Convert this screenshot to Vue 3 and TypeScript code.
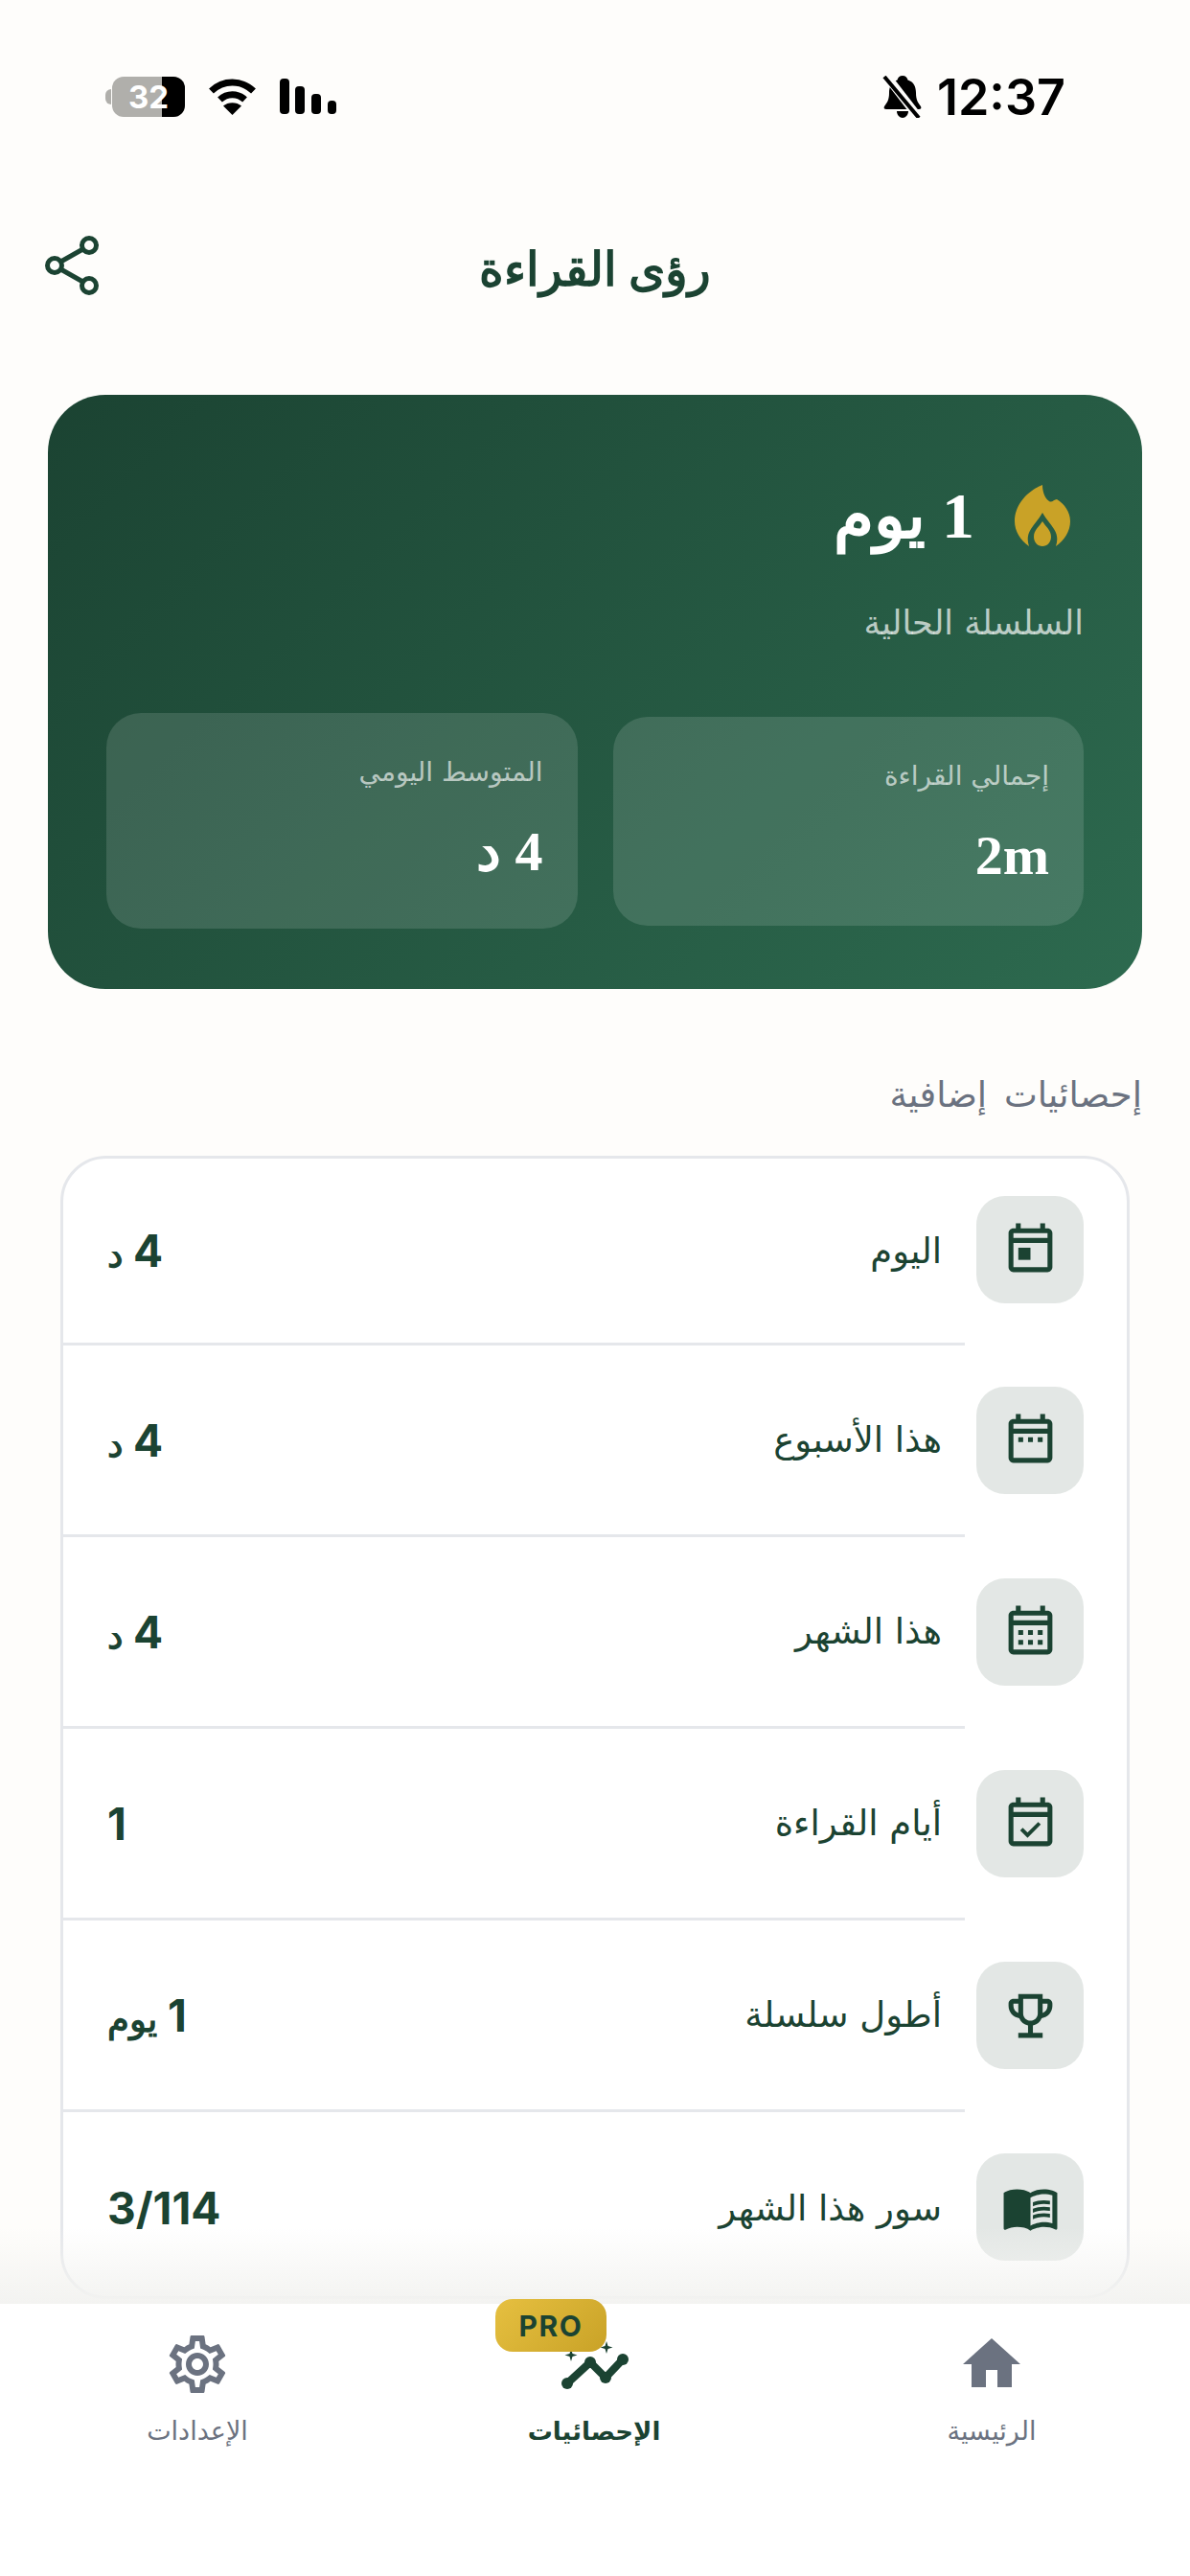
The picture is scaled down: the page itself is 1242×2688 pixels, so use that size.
<template>
  <div class="page" dir="rtl">
    <div class="status-bar">
      <div class="status-time">
        <span class="time" dir="ltr">12:37</span>
        <svg class="bell" width="42" height="44" viewBox="0 0 42 44">
          <path d="M21 0c3 0 5 2 5.500 4.500C33 6.500 35 12 35 18c0 7 2 10 5 14 1 2 0 3-2 3H4c-2 0-3-1-2-3 3-4 5-7 5-14C7 12 9 6.500 15.500 4.500 16 2 18 0 21 0z" fill="#000" />
          <path d="M15 37h12c0 4-3 7-6 7s-6-3-6-7z" fill="#000" />
          <path d="M4 0l34 44" stroke="#fefdfb" stroke-width="9" />
          <path d="M2 1l36 43" stroke="#000" stroke-width="4" />
        </svg>
      </div>
      <div class="status-right">
        <svg width="60" height="38" viewBox="0 0 60 38">
          <rect x="0" y="0" width="10" height="37" rx="4" />
          <rect x="16" y="8" width="10" height="29" rx="4" />
          <rect x="33" y="16" width="10" height="21" rx="4" />
          <rect x="50" y="23" width="9" height="14" rx="4" />
        </svg>
        <svg width="51" height="38" viewBox="0 0 51 38">
          <path d="M3.500 13C16 1 35 1 47.500 13" fill="none" stroke="#000" stroke-width="7" />
          <path d="M12.500 22C20 15 31 15 38.500 22" fill="none" stroke="#000" stroke-width="7" />
          <path d="M25.500 38L16 28.500C21 24 30 24 35 28.500z" />
        </svg>
        <div class="battery" dir="ltr">
          <span class="battery-nub"></span>
          <div class="battery-body">
            <span class="battery-level"></span>
            <span class="battery-text">32</span>
          </div>
        </div>
      </div>
    </div>

    <header class="header">
      <h1 class="title">رؤى القراءة</h1>
      <svg class="share" width="58" height="62" viewBox="0 0 58 62" fill="none" stroke="#1b4332" stroke-width="5">
        <circle cx="47" cy="10" r="7.500" />
        <circle cx="11" cy="31" r="7.500" />
        <circle cx="47" cy="52" r="7.500" />
        <path d="M40.500 14L17.500 27M17.500 35l23 13" />
      </svg>
    </header>

    <main class="content">
      <section class="hero">
        <div class="streak">
          <svg class="flame" width="58" height="64" viewBox="0 0 58 64">
            <path d="M29 0C29 6 31 14 36 17C39 19 41 15 44 15C52 20 58 28 58 38C58 48 52 58 43 64C45 58 45 52 41 46C38 41 33 36 29 29C25 36 20 41 17 46C13 52 13 58 15 64C6 58 0 48 0 38C0 20 14 6 29 0Z" fill="#c9a227" />
            <path d="M29 38C32 43 38 47 38 54C38 60 34 64 29 64C24 64 20 60 20 54C20 47 26 43 29 38Z" fill="#c9a227" />
          </svg>
          <span class="streak-value">1 يوم</span>
        </div>
        <p class="streak-label">السلسلة الحالية</p>
        <div class="hero-stats">
          <div class="hero-stat">
            <span class="hero-stat-label">إجمالي القراءة</span>
            <span class="hero-stat-value">2m</span>
          </div>
          <div class="hero-stat hero-stat-big">
            <span class="hero-stat-label">المتوسط اليومي</span>
            <span class="hero-stat-value">4 د</span>
          </div>
        </div>
      </section>

      <h2 class="section-title">إحصائيات إضافية</h2>

      <section class="list">
        <div v-for="row in rows" :key="row.label" class="row">
          <div class="row-icon">
            <svg width="61" height="61" viewBox="0 0 24 24" fill="#1b4332">
              <path v-if="row.icon !== 'trophy' && row.icon !== 'book'" fill-rule="evenodd" :d="calendarPath" />
              <path v-if="row.icon === 'today'" d="M7 11h5v5H7z" />
              <path v-if="row.icon === 'week'" d="M7 10.500h2v2H7zM11 10.500h2v2h-2zM15 10.500h2v2h-2z" />
              <path v-if="row.icon === 'month'" d="M7 11h2v2H7zM11 11h2v2h-2zM15 11h2v2h-2zM7 15h2v2H7zM11 15h2v2h-2zM15 15h2v2h-2z" />
              <path v-if="row.icon === 'check'" d="M8.300 14l2.500 2.500 4.900-4.900" fill="none" stroke="#1b4332" stroke-width="1.500" />
              <path v-if="row.icon === 'trophy'" d="M19 5h-2V3H7v2H5c-1.100 0-2 .9-2 2v1c0 2.550 1.920 4.630 4.390 4.940.63 1.500 1.980 2.630 3.610 2.960V19H7v2h10v-2h-4v-3.100c1.630-.33 2.980-1.460 3.610-2.960C19.080 12.630 21 10.550 21 8V7c0-1.100-.9-2-2-2zM5 8V7h2v3.820C5.840 10.400 5 9.300 5 8zm7 6c-1.650 0-3-1.350-3-3V5h6v6c0 1.650-1.350 3-3 3zm7-6c0 1.300-.84 2.400-2 2.820V7h2v1z" />
              <template v-if="row.icon === 'book'">
                <path d="M21 5c-1.110-.35-2.330-.5-3.500-.5-1.950 0-4.050.4-5.500 1.500-1.450-1.100-3.550-1.500-5.500-1.500S2.450 4.900 1 6v14.650c0 .25.25.5.5.5.1 0 .15-.05.25-.05C3.100 20.450 5.050 20 6.500 20c1.950 0 4.050.4 5.500 1.500 1.350-.85 3.800-1.500 5.500-1.500 1.650 0 3.350.3 4.750 1.050.1.05.15.05.25.05.25 0 .5-.25.5-.5V6c-.6-.45-1.250-.75-2-1zm0 13.500c-1.100-.35-2.300-.5-3.500-.5-1.700 0-4.150.65-5.500 1.500V8c1.350-.85 3.800-1.500 5.500-1.500 1.200 0 2.400.15 3.500.5v11.500z" />
                <path d="M17.500 10.500c.88 0 1.730.09 2.500.26V9.240c-.79-.15-1.640-.24-2.500-.24-1.700 0-3.240.29-4.500.83v1.660c1.130-.64 2.700-.99 4.500-.99zM13 12.490v1.660c1.130-.64 2.700-.99 4.500-.99.88 0 1.730.09 2.500.26V11.900c-.79-.15-1.640-.24-2.500-.24-1.700 0-3.240.3-4.500.83zM17.500 14.330c-1.700 0-3.240.29-4.500.83v1.660c1.130-.64 2.700-.99 4.500-.99.88 0 1.730.09 2.500.26v-1.520c-.79-.16-1.640-.24-2.500-.24z" />
              </template>
            </svg>
          </div>
          <div class="row-body">
            <span class="row-label">{{ row.label }}</span>
            <span class="row-value">{{ row.value }} <span v-if="row.unit" class="row-unit">{{ row.unit }}</span></span>
          </div>
        </div>
      </section>
      <div class="fade"></div>
    </main>

    <nav class="tabs">
      <div class="tab">
        <svg width="72" height="72" viewBox="0 0 24 24" fill="#6b7280">
          <path d="M10 20v-6h4v6h5v-8h3L12 3 2 12h3v8z" />
        </svg>
        <span class="tab-label">الرئيسية</span>
      </div>
      <div class="tab tab-active">
        <svg width="72" height="72" viewBox="0 0 72 72" fill="none">
          <path d="M8 56L32 34L48 50L66 31" stroke="#1b4332" stroke-width="8" stroke-linecap="round" stroke-linejoin="round" />
          <circle cx="8" cy="56" r="6" fill="#1b4332" />
          <circle cx="32" cy="34" r="6" fill="#1b4332" />
          <circle cx="48" cy="50" r="6" fill="#1b4332" />
          <circle cx="66" cy="31" r="6" fill="#1b4332" />
          <path d="M12 20l1.500 5 5 1.500-5 1.500-1.500 5-1.500-5-5-1.500 5-1.500z" fill="#1b4332" />
          <path d="M49 12l1.500 5 5 1.500-5 1.500-1.500 5-1.500-5-5-1.500 5-1.500z" fill="#1b4332" />
        </svg>
        <span class="tab-label">الإحصائيات</span>
        <span class="pro-badge" dir="ltr">PRO</span>
      </div>
      <div class="tab">
        <svg width="72" height="72" viewBox="0 0 24 24" fill="#6b7280">
          <path d="M19.430 12.980c.04-.32.07-.64.07-.98 0-.34-.03-.66-.07-.98l2.110-1.650c.19-.15.24-.42.12-.64l-2-3.460c-.09-.16-.26-.25-.44-.25-.06 0-.12.01-.17.03l-2.490 1c-.52-.4-1.080-.73-1.690-.98l-.38-2.650C14.460 2.180 14.250 2 14 2h-4c-.25 0-.46.18-.49.42l-.38 2.650c-.61.25-1.170.59-1.690.98l-2.490-1c-.06-.02-.12-.03-.18-.03-.17 0-.34.09-.43.25l-2 3.460c-.13.22-.07.49.12.64l2.110 1.650c-.04.32-.07.65-.07.98 0 .33.03.66.07.98l-2.110 1.650c-.19.15-.24.42-.12.64l2 3.460c.09.16.26.25.44.25.06 0 .12-.01.17-.03l2.490-1c.52.4 1.080.73 1.690.98l.38 2.650c.03.24.24.42.49.42h4c.25 0 .46-.18.49-.42l.38-2.650c.61-.25 1.170-.59 1.690-.98l2.490 1c.06.02.12.03.18.03.17 0 .34-.09.43-.25l2-3.460c.12-.22.07-.49-.12-.64l-2.110-1.650zm-1.980-1.710c.04.31.05.52.05.73 0 .21-.02.43-.05.73l-.14 1.130.89.7 1.080.84-.7 1.210-1.270-.51-1.040-.42-.9.68c-.43.32-.84.56-1.250.73l-1.060.43-.16 1.130-.2 1.350h-1.400l-.19-1.350-.16-1.130-1.060-.43c-.43-.18-.83-.41-1.230-.71l-.91-.7-1.060.43-1.270.51-.7-1.210 1.080-.84.89-.7-.14-1.130c-.03-.31-.05-.54-.05-.74s.02-.43.05-.73l.14-1.130-.89-.7-1.080-.84.7-1.210 1.270.51 1.040.42.9-.68c.43-.32.84-.56 1.250-.73l1.060-.43.16-1.130.2-1.350h1.390l.19 1.350.16 1.130 1.060.43c.43.18.83.41 1.230.71l.91.7 1.060-.43 1.270-.51.7 1.210-1.070.85-.89.7.14 1.130zM12 8c-2.210 0-4 1.790-4 4s1.790 4 4 4 4-1.790 4-4-1.790-4-4-4zm0 6c-1.100 0-2-.9-2-2s.9-2 2-2 2 .9 2 2-.9 2-2 2z" />
        </svg>
        <span class="tab-label">الإعدادات</span>
      </div>
    </nav>
  </div>
</template>

<script setup lang="ts">
interface StatRow {
  icon: string
  label: string
  value: string
  unit?: string
}

const calendarPath =
  'M19 3h-1V1h-2v2H8V1H6v2H5C3.900 3 3 3.900 3 5v14c0 1.100.9 2 2 2h14c1.100 0 2-.9 2-2V5c0-1.100-.9-2-2-2zm0 16H5V9h14v10zM5 7V5h14v2H5z'

const rows: StatRow[] = [
  { icon: 'today', label: 'اليوم', value: '4', unit: 'د' },
  { icon: 'week', label: 'هذا الأسبوع', value: '4', unit: 'د' },
  { icon: 'month', label: 'هذا الشهر', value: '4', unit: 'د' },
  { icon: 'check', label: 'أيام القراءة', value: '1' },
  { icon: 'trophy', label: 'أطول سلسلة', value: '1', unit: 'يوم' },
  { icon: 'book', label: 'سور هذا الشهر', value: '3/114' },
]
</script>

<style>
html,
body {
  margin: 0;
  background: #fefdfb;
}
</style>

<style scoped>
.page {
  width: 1242px;
  height: 2688px;
  display: flex;
  flex-direction: column;
  overflow: hidden;
  background: #fefdfb;
  color: #1b4332;
  font-family: "Liberation Serif", serif;
}

.status-bar {
  height: 202px;
  flex: none;
  box-sizing: border-box;
  padding: 0 130px 0 110px;
  display: flex;
  align-items: center;
  justify-content: space-between;
}

.status-time,
.status-right {
  display: flex;
  align-items: center;
}

.status-time {
  gap: 15px;
}

.status-right {
  gap: 24px;
}

.time {
  font-family: Inter, sans-serif;
  font-size: 52px;
  font-weight: 600;
  color: #000;
}

.battery {
  display: flex;
  align-items: center;
  gap: 1px;
}

.battery-nub {
  width: 6px;
  height: 16px;
  border-radius: 6px 0 0 6px;
  background: #b0afab;
}

.battery-body {
  position: relative;
  width: 76px;
  height: 42px;
  border-radius: 12px;
  overflow: hidden;
  background: #b0afab;
  display: flex;
  align-items: center;
  justify-content: center;
}

.battery-level {
  position: absolute;
  top: 0;
  right: 0;
  bottom: 0;
  width: 24px;
  background: #000;
}

.battery-text {
  position: relative;
  font-family: Inter, sans-serif;
  font-size: 33px;
  font-weight: 700;
  color: #fff;
}

.header {
  height: 158px;
  flex: none;
  position: relative;
  display: flex;
  align-items: center;
  justify-content: center;
}

.title {
  margin: 0;
  font-size: 49px;
  font-weight: 700;
}

.share {
  position: absolute;
  left: 46px;
  top: 44px;
}

.content {
  flex: 1;
  min-height: 0;
  position: relative;
  overflow: hidden;
  padding-top: 52px;
}

.hero {
  margin: 0 50px;
  height: 620px;
  box-sizing: border-box;
  padding: 86px 61px 0;
  border-radius: 60px;
  background: linear-gradient(135deg, #1b4332, #2d6a4f);
  color: #fff;
}

.streak {
  display: flex;
  align-items: center;
  gap: 42px;
  padding-right: 14px;
  height: 80px;
}

.streak-value {
  font-size: 68px;
  font-weight: 700;
}

.streak-label {
  margin: 47px 0 0;
  height: 50px;
  line-height: 50px;
  font-family: "DejaVu Sans", sans-serif;
  font-size: 35px;
  color: rgba(255, 255, 255, 0.7);
}

.hero-stats {
  display: grid;
  grid-template-columns: 1fr 1fr;
  gap: 37px;
  align-items: center;
  height: 225px;
  margin-top: 69px;
}

.hero-stat {
  height: 218px;
  box-sizing: border-box;
  padding: 42px 36px;
  border-radius: 36px;
  background: rgba(255, 255, 255, 0.13);
  display: flex;
  flex-direction: column;
  gap: 30px;
}

.hero-stat-big {
  height: 225px;
}

.hero-stat-label {
  font-family: "DejaVu Sans", sans-serif;
  font-size: 28px;
  line-height: 40px;
  color: rgba(255, 255, 255, 0.65);
}

.hero-stat-value {
  font-size: 58px;
  line-height: 66px;
  font-weight: 700;
}

.section-title {
  margin: 88px 50px 0 0;
  height: 46px;
  line-height: 46px;
  font-family: "DejaVu Sans", sans-serif;
  font-size: 37px;
  font-weight: 500;
  word-spacing: 6px;
  color: #6b7280;
}

.list {
  margin: 40px 63px 0;
  height: 1193px;
  box-sizing: border-box;
  background: #fff;
  border: 3px solid #e5e7eb;
  border-radius: 48px;
  padding-right: 45px;
}

.row {
  display: flex;
  align-items: center;
  gap: 12px;
  height: 200px;
}

.row:first-child {
  height: 195px;
}

.row-icon {
  flex: none;
  width: 112px;
  height: 112px;
  margin-top: -2px;
  border-radius: 30px;
  background: #e3e7e5;
  display: flex;
  align-items: center;
  justify-content: center;
}

.row:first-child .row-icon {
  margin-top: -5px;
}

.row-body {
  flex: 1;
  height: 100%;
  box-sizing: border-box;
  padding: 0 24px 0 46px;
  display: flex;
  align-items: center;
  justify-content: space-between;
  border-bottom: 3px solid #e5e7eb;
}

.row:last-child .row-body {
  border-bottom: none;
}

.row-label {
  font-family: "DejaVu Sans", sans-serif;
  font-size: 37px;
}

.row-value {
  font-family: Inter, sans-serif;
  font-size: 46px;
  font-weight: 700;
}

.row-unit {
  font-size: 37px;
}

.fade {
  position: absolute;
  left: 0;
  right: 0;
  bottom: 0;
  height: 80px;
  background: linear-gradient(rgba(245, 245, 243, 0), #f3f3f1);
}

.tabs {
  height: 284px;
  flex: none;
  box-sizing: border-box;
  padding: 27px 0 0;
  background: #fff;
  display: grid;
  grid-template-columns: 414px 416px 412px;
}

.tab {
  position: relative;
  display: flex;
  flex-direction: column;
  align-items: center;
  gap: 12px;
  color: #6b7280;
}

.tab-active {
  color: #1b4332;
}

.tab-label {
  font-family: "DejaVu Sans", sans-serif;
  font-size: 27px;
  line-height: 44px;
}

.tab-active .tab-label {
  font-weight: 700;
  font-size: 26px;
}

.pro-badge {
  position: absolute;
  top: -32px;
  left: 105px;
  width: 116px;
  height: 55px;
  border-radius: 18px;
  background: linear-gradient(135deg, #e6c040, #c9a227);
  color: #1b4332;
  font-family: Inter, sans-serif;
  font-size: 30px;
  font-weight: 700;
  letter-spacing: 1.5px;
  display: flex;
  align-items: center;
  justify-content: center;
}
</style>
